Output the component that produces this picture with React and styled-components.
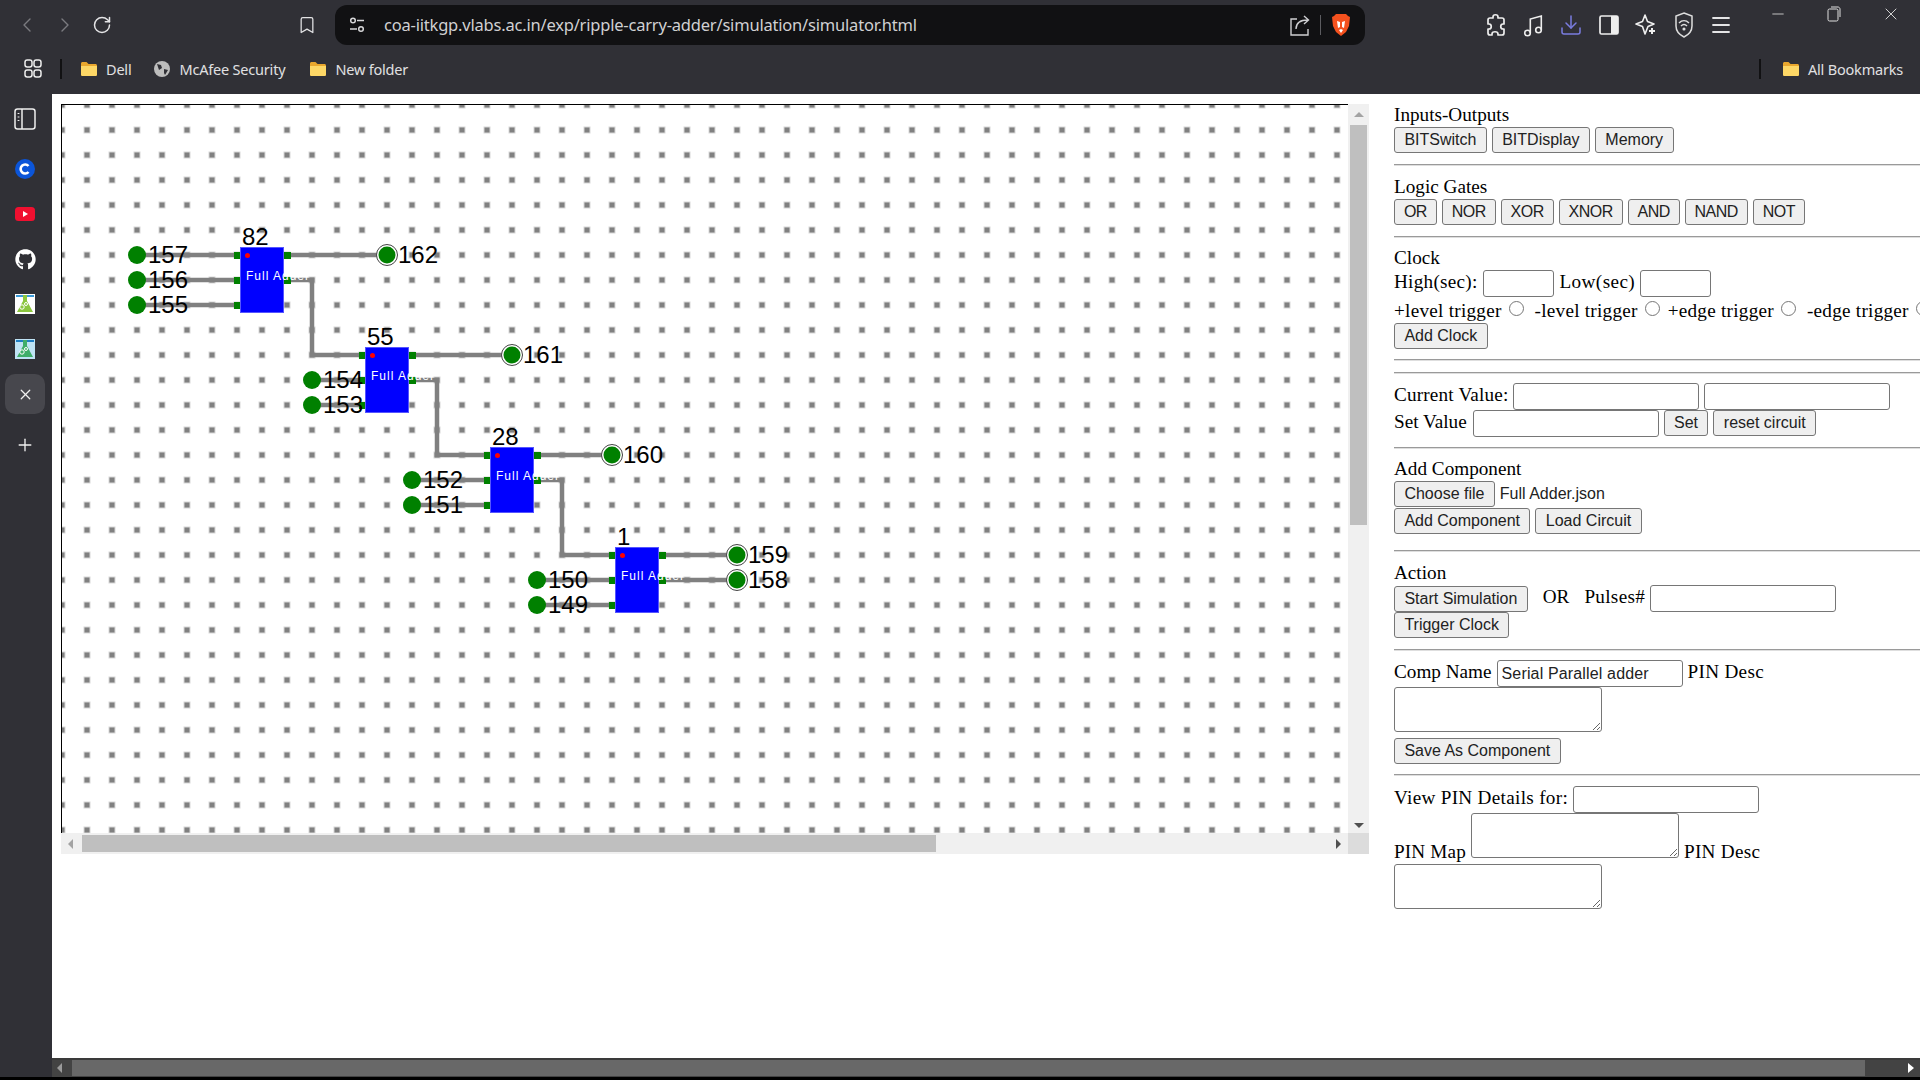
import styled, { createGlobalStyle } from 'styled-components';
import { ChevronLeft, ChevronRight, RotateCw, Bookmark, Download, Menu, X, Plus, Minus } from 'lucide-react';
import { FaGithub } from 'react-icons/fa';

const GlobalStyle = createGlobalStyle`
  html, body { margin: 0; padding: 0; overflow: hidden; }
  * { box-sizing: border-box; }
`;

const Page = styled.div`
  width: 1920px;
  height: 1080px;
  overflow: hidden;
  display: flex;
  flex-direction: column;
  background: #303036;
  font-family: "Liberation Serif", serif;
`;

/* browser chrome */
const TopBar = styled.div`
  height: 50px;
  flex: none;
  display: flex;
  align-items: center;
  position: relative;
`;

const IconSlot = styled.div`
  width: ${p => p.$w || 37.6}px;
  flex: none;
  display: flex;
  align-items: center;
  justify-content: center;
  margin-left: ${p => p.$left || 0}px;
  color: ${p => p.$color || '#e4e4e6'};
`;

const NavGroup = styled.div`
  display: flex;
  align-items: center;
  margin-left: 8px;
`;

const AddressBar = styled.div`
  width: 1030px;
  height: 40px;
  margin-left: 9px;
  background: #111113;
  border-radius: 12px;
  display: flex;
  align-items: center;
  color: #e2e2e4;
`;

const UrlText = styled.div`
  margin: 0 0 2px 5px;
  flex: 1;
  font: 16.5px "Noto Sans", sans-serif;
  letter-spacing: -0.2px;
  color: #d0d0d2;
`;

const AddressEnd = styled.div`
  display: flex;
  align-items: center;
  gap: 10px;
  padding-right: 14px;
`;

const VLine = styled.div`
  width: 1px;
  height: 20px;
  background: #5c5c60;
`;

const Tools = styled.div`
  display: flex;
  align-items: center;
  margin-left: 112px;
`;

const WindowButtons = styled.div`
  position: absolute;
  top: 5px;
  right: 1px;
  display: flex;
  color: #e0e0e0;
`;

const WindowBtn = styled.div`
  width: 56.500px;
  height: 18px;
  display: flex;
  align-items: center;
  justify-content: center;
`;

const BookmarkBar = styled.div`
  height: 44px;
  flex: none;
  display: flex;
  align-items: center;
  padding: 0 0 7px 22px;
  color: #e0e0e2;
  font: 14.500px "Noto Sans", sans-serif;
  letter-spacing: -0.2px;
`;

const BookmarkItem = styled.div`
  display: flex;
  align-items: center;
  gap: 8px;
  margin-left: ${p => p.$left || 0}px;
  padding-right: ${p => p.$right || 0}px;
`;

const BarDivider = styled.div`
  width: 2px;
  height: 20px;
  background: #111113;
  margin-left: ${p => p.$left || 0}px;
`;

const Spacer = styled.div`
  flex: 1;
`;

const Body = styled.div`
  flex: 1;
  min-height: 0;
  display: flex;
`;

const Sidebar = styled.div`
  width: 52px;
  flex: none;
  display: flex;
  flex-direction: column;
  align-items: center;
  padding-right: 2px;
`;

const SideSlot = styled.div`
  width: 40px;
  height: ${p => p.$h || 40}px;
  margin-bottom: 5px;
  margin-top: ${p => p.$top || 0}px;
  display: flex;
  align-items: center;
  justify-content: center;
  border-radius: 10px;
  color: #f0f0f0;
  background: ${p => (p.$active ? '#47474d' : 'transparent')};
`;

const Main = styled.div`
  flex: 1;
  min-width: 0;
  display: flex;
  flex-direction: column;
`;

const Content = styled.div`
  flex: 1;
  min-height: 0;
  background: #fff;
  display: flex;
  overflow: hidden;
`;

/* scrollable circuit canvas */
const CanvasFrame = styled.div`
  width: 1308px;
  height: 750px;
  flex: none;
  margin: 10px 0 0 9px;
  display: grid;
  grid-template-columns: 1fr 21px;
  grid-template-rows: 1fr 21px;
`;

const Viewport = styled.div`
  position: relative;
  overflow: hidden;
  border-top: 1px solid #000;
  border-left: 1px solid #000;
`;

const Board = styled.svg`
  display: block;
  position: absolute;
  left: 0;
  top: 0;
`;

const NodeLabel = styled.span`
  position: absolute;
  font: 24px/24px "Liberation Sans", sans-serif;
  color: #000;
  white-space: nowrap;
`;

const Adder = styled.div`
  position: absolute;
  width: 44px;
  height: 66px;
  background: #0000ff;
  border: 1px solid #5555ff;
`;

const AdderName = styled.span`
  position: absolute;
  left: 5px;
  top: 21px;
  font: 12px/14px "Liberation Sans", sans-serif;
  letter-spacing: 1px;
  color: #fff;
  white-space: nowrap;
`;

const RedPin = styled.i`
  position: absolute;
  left: 4px;
  top: 5px;
  width: 5px;
  height: 5px;
  border-radius: 50%;
  background: #ff0000;
`;

const VTrack = styled.div`
  background: #f0f0f0;
  position: relative;
`;

const VThumb = styled.div`
  position: absolute;
  left: 2px;
  right: 2px;
  top: 21px;
  height: 400px;
  background: #bfbfbf;
`;

const HTrack = styled.div`
  background: #f0f0f0;
  position: relative;
`;

const HThumb = styled.div`
  position: absolute;
  left: 21px;
  top: 2px;
  bottom: 2px;
  width: 854px;
  background: #bfbfbf;
`;

const Corner = styled.div`
  background: #dcdcdc;
`;

const Arrow = styled.i`
  position: absolute;
  width: 0;
  height: 0;
  ${p => p.$dir === 'up' && `left: 6px; top: 8px; border: 5px solid transparent; border-top: 0; border-bottom: 5px solid #a3a3a3;`}
  ${p => p.$dir === 'down' && `left: 6px; bottom: 5px; border: 5px solid transparent; border-bottom: 0; border-top: 5px solid #505050;`}
  ${p => p.$dir === 'left' && `left: 7px; top: 6px; border: 5px solid transparent; border-left: 0; border-right: 5px solid #a3a3a3;`}
  ${p => p.$dir === 'right' && `right: 7px; top: 6px; border: 5px solid transparent; border-right: 0; border-left: 5px solid #505050;`}
`;

/* control panel */
const Panel = styled.div`
  flex: 1;
  min-width: 0;
  margin-left: 25px;
  padding-top: 10px;
  font-size: 19.2px;
  color: #000;
  white-space: nowrap;
`;

const Title = styled.div`
  height: 23px;
  line-height: 21px;
`;

const Row = styled.div`
  height: ${p => p.$h || 26}px;
  display: flex;
  align-items: ${p => p.$align || 'center'};
  gap: ${p => p.$gap ?? 5}px;
  margin-top: ${p => p.$top || 0}px;
`;

const Label = styled.span`
  margin: 0 ${p => p.$right || 0}px ${p => p.$bottom ?? 3}px ${p => p.$left || 0}px;
  letter-spacing: ${p => p.$ls || 0}px;
  flex: none;
`;

const TriggerLabel = styled.span`
  margin-top: 2px;
  letter-spacing: 0.25px;
  flex: none;
`;

const Rule = styled.div`
  height: 2px;
  background: linear-gradient(#9a9a9a 50%, #dedede 50%);
  margin: ${p => p.$before ?? 11}px 0 ${p => p.$after ?? 10}px;
`;

const Btn = styled.button`
  height: 26px;
  padding: 0 ${p => (p.$tight ? 8.9 : 9.4)}px;
  background: #efefef;
  border: 1px solid #767676;
  border-radius: 3px;
  font: 16px "Liberation Sans", sans-serif;
  letter-spacing: ${p => (p.$tight ? -0.5 : 0)}px;
  color: #222;
  flex: none;
`;

const Field = styled.input`
  width: ${p => p.$w || 186}px;
  height: 27px;
  padding: 1px 4px;
  border: 1px solid #767676;
  border-radius: 3px;
  background: #fff;
  font: 16px "Liberation Sans", sans-serif;
  letter-spacing: 0.15px;
  color: #222;
  flex: none;
`;

const Memo = styled.textarea`
  display: block;
  width: 208px;
  height: 45px;
  border: 1px solid #767676;
  border-radius: 3px;
  background: #fff;
  padding: 2px;
  margin: ${p => p.$top || 0}px 0 0;
  flex: none;
`;

const Radio = styled.input.attrs({ type: 'radio' })`
  width: 15px;
  height: 15px;
  margin: -3px ${p => p.$right ?? 11}px 0 7px;
  flex: none;
`;

const FileName = styled.span`
  font: 16px "Liberation Sans", sans-serif;
  color: #222;
`;

const BottomBar = styled.div`
  height: 19px;
  flex: none;
  background: #434343;
  border-top: 2px solid #3a3a3a;
  position: relative;
`;

const BottomThumb = styled.div`
  position: absolute;
  left: 20px;
  top: 0;
  bottom: 1px;
  width: 1793px;
  background: #686868;
`;

const BottomArrow = styled.i`
  position: absolute;
  top: 3px;
  width: 0;
  height: 0;
  border: 5px solid transparent;
  ${p => (p.$right
    ? 'right: 6px; border-right: 0; border-left: 6px solid #fff;'
    : 'left: 5px; border-left: 0; border-right: 5px solid #9a9a9a;')}
`;

const BlackEdge = styled.div`
  height: 3px;
  flex: none;
  background: #000;
`;

const gx = c => 25 + 25 * c;
const gy = r => 25 + 25 * r;

const adders = [
  { id: 82, col: 6, row: 5 },
  { id: 55, col: 11, row: 9 },
  { id: 28, col: 16, row: 13 },
  { id: 1, col: 21, row: 17 },
];

const switches = [
  { id: 157, col: 2, row: 5, to: 6 },
  { id: 156, col: 2, row: 6, to: 6 },
  { id: 155, col: 2, row: 7, to: 6 },
  { id: 154, col: 9, row: 10, to: 11 },
  { id: 153, col: 9, row: 11, to: 11 },
  { id: 152, col: 13, row: 14, to: 16 },
  { id: 151, col: 13, row: 15, to: 16 },
  { id: 150, col: 18, row: 18, to: 21 },
  { id: 149, col: 18, row: 19, to: 21 },
];

const displays = [
  { id: 162, col: 12, row: 5, from: 8 },
  { id: 161, col: 17, row: 9, from: 13 },
  { id: 160, col: 21, row: 13, from: 18 },
  { id: 159, col: 26, row: 17, from: 23 },
  { id: 158, col: 26, row: 18, from: 23 },
];

const carries = [
  [[8, 6], [9, 6], [9, 9], [11, 9]],
  [[13, 10], [14, 10], [14, 13], [16, 13]],
  [[18, 14], [19, 14], [19, 17], [21, 17]],
];

const Folder = () => (
  <svg width="18" height="18" viewBox="0 0 18 18">
    <path d="M1 3.500C1 2.700 1.700 2 2.500 2h4l2 2h7c.8 0 1.500.7 1.500 1.500v9c0 .8-.7 1.500-1.500 1.500h-13C1.700 16 1 15.300 1 14.500z" fill="#e9a72e" />
    <path d="M1 6h16v8.500c0 .8-.7 1.500-1.500 1.500h-13C1.700 16 1 15.300 1 14.500z" fill="#fdd766" />
  </svg>
);

const Flask = ({ bg, top, body }) => (
  <svg width="20" height="20" viewBox="0 0 20 20">
    <rect width="20" height="20" fill={bg} />
    <rect x="1" y="1" width="7" height="2" fill={top} />
    <rect x="12" y="1" width="7" height="2" fill={top} />
    <path d="M8 1h4v6l6 11H2L8 7z" fill={body} />
    <circle cx="7" cy="13" r="2.200" fill="none" stroke="#fff" />
    <circle cx="11" cy="10" r="1.500" fill="none" stroke="#fff" />
  </svg>
);

const Circuit = () => (
  <>
    <Board width="1300" height="740">
      <defs>
        <pattern id="holes" x="21.500" y="21.500" width="25" height="25" patternUnits="userSpaceOnUse">
          <rect width="7" height="7" fill="#d6d6d6" />
          <rect x="1" y="1" width="5" height="5" fill="#808080" />
        </pattern>
      </defs>
      <rect width="1300" height="740" fill="url(#holes)" />
      <g stroke="#808080" strokeWidth="4.500" fill="none">
        {switches.map(s => (
          <line key={s.id} x1={gx(s.col)} y1={gy(s.row)} x2={gx(s.to)} y2={gy(s.row)} />
        ))}
        {displays.map(d => (
          <line key={d.id} x1={gx(d.from)} y1={gy(d.row)} x2={gx(d.col)} y2={gy(d.row)} />
        ))}
        {carries.map((c, i) => (
          <polyline key={i} points={c.map(([x, y]) => `${gx(x)},${gy(y)}`).join(' ')} />
        ))}
      </g>
      {adders.map(a => (
        <g key={a.id} fill="#008000">
          {[0, 1, 2].map(i => (
            <rect key={i} x={gx(a.col) - 3} y={gy(a.row + i) - 3} width="7" height="7" />
          ))}
          {[0, 1].map(i => (
            <rect key={i} x={gx(a.col + 2) - 3} y={gy(a.row + i) - 3} width="7" height="7" />
          ))}
        </g>
      ))}
      {switches.map(s => (
        <circle key={s.id} cx={gx(s.col)} cy={gy(s.row)} r="9" fill="#008000" />
      ))}
      {displays.map(d => (
        <g key={d.id}>
          <circle cx={gx(d.col)} cy={gy(d.row)} r="10.500" fill="#fff" stroke="#444" />
          <circle cx={gx(d.col)} cy={gy(d.row)} r="8.500" fill="#008000" />
        </g>
      ))}
    </Board>
    {adders.map(a => (
      <Adder key={a.id} style={{ left: gx(a.col) + 3, top: gy(a.row) - 8 }}>
        <RedPin />
        <AdderName>Full Adder</AdderName>
      </Adder>
    ))}
    {adders.map(a => (
      <NodeLabel key={a.id} style={{ left: gx(a.col) + 5, top: gy(a.row) - 30 }}>{a.id}</NodeLabel>
    ))}
    {switches.map(s => (
      <NodeLabel key={s.id} style={{ left: gx(s.col) + 11, top: gy(s.row) - 12 }}>{s.id}</NodeLabel>
    ))}
    {displays.map(d => (
      <NodeLabel key={d.id} style={{ left: gx(d.col) + 11, top: gy(d.row) - 12 }}>{d.id}</NodeLabel>
    ))}
  </>
);

export default function App() {
  return (
    <Page>
      <GlobalStyle />
      <TopBar>
        <NavGroup>
          <IconSlot $w={38} $color="#7b7b80"><ChevronLeft size={24} strokeWidth={1.4} /></IconSlot>
          <IconSlot $w={38} $color="#7b7b80"><ChevronRight size={24} strokeWidth={1.4} /></IconSlot>
          <IconSlot $w={36}><RotateCw size={20} strokeWidth={1.8} /></IconSlot>
        </NavGroup>
        <IconSlot $w={38} $left={168}><Bookmark size={20} strokeWidth={1.5} /></IconSlot>
        <AddressBar>
          <IconSlot $w={44}>
            <svg width="18" height="18" viewBox="0 0 18 18" fill="none" stroke="#d8d8da" strokeWidth="1.500">
              <circle cx="5" cy="4.500" r="2.300" />
              <path d="M9 4.500h7M2 13h7" />
              <circle cx="13" cy="13" r="2.300" />
            </svg>
          </IconSlot>
          <UrlText>coa-iitkgp.vlabs.ac.in/exp/ripple-carry-adder/simulation/simulator.html</UrlText>
          <AddressEnd>
            <svg width="21" height="21" viewBox="0 0 21 21" fill="none" stroke="#cfcfd2" strokeWidth="1.400">
              <path d="M8 4H2v16h17v-6" />
              <path d="M7 14c0-6 4-9 12-9M15 1l4.500 4-4.500 4" />
            </svg>
            <VLine />
            <svg width="20" height="24" viewBox="0 0 20 24">
              <path d="M5 1h10l2 2 2 1-1 9-3 6-5 4-5-4-3-6-1-9 2-1z" fill="#f4511e" />
              <path d="M6 8l3 1v5l-2 1zM14 8l-3 1v5l2 1zM8 17l2-1 2 1-2 3z" fill="#fff" />
            </svg>
          </AddressEnd>
        </AddressBar>
        <Tools>
          <IconSlot>
            <svg width="20" height="24" viewBox="0 0 20 24" fill="none" stroke="#eee" strokeWidth="1.700" strokeLinejoin="round">
              <path d="M7 4c0-3 5-3 5 0v1h4c1 0 2 1 2 2v4h-1c-3 0-3 5 0 5h1v4c0 1-1 2-2 2h-4v-1c0-3-6-3-6 0v1H4c-1 0-2-1-2-2v-4h1c3 0 3-5 0-5H2V7c0-1 1-2 2-2h3z" />
            </svg>
          </IconSlot>
          <IconSlot>
            <svg width="20" height="24" viewBox="0 0 20 24" fill="none" stroke="#eee" strokeWidth="1.600">
              <circle cx="4.500" cy="20" r="2.800" />
              <circle cx="15.500" cy="17" r="2.800" />
              <path d="M7.300 20V6l11-3v14" />
            </svg>
          </IconSlot>
          <IconSlot $color="#7a7ce0"><Download size={24} strokeWidth={1.5} /></IconSlot>
          <IconSlot>
            <svg width="20" height="20" viewBox="0 0 20 20">
              <rect x="1" y="1" width="18" height="18" rx="1.500" fill="none" stroke="#eee" strokeWidth="1.700" />
              <rect x="12" y="1" width="7" height="18" fill="#eee" />
            </svg>
          </IconSlot>
          <IconSlot>
            <svg width="22" height="24" viewBox="0 0 22 24" fill="none" stroke="#eee" strokeWidth="1.600" strokeLinejoin="round">
              <path d="M10 2l2.500 6.500L19 11l-6 2.500L10 21l-2.500-7.500L1 11l6.500-2.500z" />
              <path d="M17 15v6M14 18h6" strokeWidth="2" />
            </svg>
          </IconSlot>
          <IconSlot>
            <svg width="20" height="26" viewBox="0 0 20 26" fill="none" stroke="#ddd" strokeWidth="1.500">
              <path d="M10 1l8 3v10c0 5-4 9-8 11-4-2-8-6-8-11V4z" />
              <path d="M5 11c3-3 7-3 10 0M7 14c2-2 4-2 6 0" />
              <circle cx="10" cy="17" r=".8" fill="#ddd" />
            </svg>
          </IconSlot>
          <IconSlot><Menu size={24} strokeWidth={1.8} /></IconSlot>
        </Tools>
        <WindowButtons>
          <WindowBtn><Minus size={18} strokeWidth={1.1} /></WindowBtn>
          <WindowBtn>
            <svg width="14" height="16" viewBox="0 0 14 16" fill="none" stroke="#e0e0e0">
              <rect x="1" y="3" width="10" height="12" rx="1.500" />
              <path d="M4 1h7c1 0 2 1 2 2v8" />
            </svg>
          </WindowBtn>
          <WindowBtn><X size={20} strokeWidth={1.1} /></WindowBtn>
        </WindowButtons>
      </TopBar>

      <BookmarkBar>
        <svg width="22" height="22" viewBox="0 0 22 22" fill="none" stroke="#eee" strokeWidth="1.500">
          <rect x="3" y="2" width="7" height="7" rx="2.200" />
          <rect x="12" y="2" width="7" height="7" rx="2.200" />
          <rect x="3" y="12" width="7" height="7" rx="2.200" />
          <rect x="12" y="12" width="7" height="7" rx="2.200" />
        </svg>
        <BarDivider $left={16} />
        <BookmarkItem $left={18}><Folder />Dell</BookmarkItem>
        <BookmarkItem $left={22}>
          <svg width="18" height="18" viewBox="0 0 18 18">
            <circle cx="9" cy="9" r="8" fill="#bdbdbd" />
            <path d="M4 4l4 1 1 3-3 2zM11 9l4 1-3 5-1-2z" fill="#303036" />
          </svg>
          McAfee Security
        </BookmarkItem>
        <BookmarkItem $left={24}><Folder />New folder</BookmarkItem>
        <Spacer />
        <BarDivider />
        <BookmarkItem $left={21} $right={17}><Folder />All Bookmarks</BookmarkItem>
      </BookmarkBar>

      <Body>
        <Sidebar>
          <SideSlot $h={50}>
            <svg width="22" height="22" viewBox="0 0 22 22" fill="none" stroke="#eee" strokeWidth="1.500">
              <rect x="1" y="1" width="20" height="20" rx="2.500" />
              <path d="M8 1v20" />
              <path d="M4.500 5v1M4.500 8.500v1M4.500 12v1" strokeWidth="1.800" />
            </svg>
          </SideSlot>
          <SideSlot>
            <svg width="20" height="20" viewBox="0 0 20 20">
              <circle cx="10" cy="10" r="10" fill="#0b55d9" />
              <path d="M13.500 7a4.500 4.500 0 1 0 0 6" fill="none" stroke="#fff" strokeWidth="2.600" />
            </svg>
          </SideSlot>
          <SideSlot>
            <svg width="20" height="14" viewBox="0 0 20 14">
              <rect width="20" height="14" rx="3.500" fill="#f01030" />
              <path d="M8 4l5 3-5 3z" fill="#fff" />
            </svg>
          </SideSlot>
          <SideSlot><FaGithub size={21} color="#fff" /></SideSlot>
          <SideSlot><Flask bg="#fff" top="#3a9ad9" body="#8cc63f" /></SideSlot>
          <SideSlot><Flask bg="#bfe3f5" top="#1f7fc4" body="#3fae6a" /></SideSlot>
          <SideSlot $active><X size={17} strokeWidth={1.8} /></SideSlot>
          <SideSlot $top={6}><Plus size={20} strokeWidth={1.6} /></SideSlot>
        </Sidebar>

        <Main>
          <Content>
            <CanvasFrame>
              <Viewport><Circuit /></Viewport>
              <VTrack>
                <Arrow $dir="up" />
                <VThumb />
                <Arrow $dir="down" />
              </VTrack>
              <HTrack>
                <Arrow $dir="left" />
                <HThumb />
                <Arrow $dir="right" />
              </HTrack>
              <Corner />
            </CanvasFrame>

            <Panel>
              <Title>Inputs-Outputs</Title>
              <Row>
                <Btn>BITSwitch</Btn>
                <Btn>BITDisplay</Btn>
                <Btn>Memory</Btn>
              </Row>
              <Rule />

              <Title>Logic Gates</Title>
              <Row>
                {['OR', 'NOR', 'XOR', 'XNOR', 'AND', 'NAND', 'NOT'].map(g => <Btn key={g} $tight>{g}</Btn>)}
              </Row>
              <Rule $after={9} />

              <Title>Clock</Title>
              <Row $h={27}>
                <Label $ls={0.25}>High(sec):</Label>
                <Field $w={71} />
                <Label $ls={0.4} $left={1}>Low(sec)</Label>
                <Field $w={71} />
              </Row>
              <Row $gap={0}>
                <TriggerLabel>+level trigger</TriggerLabel><Radio name="trig" />
                <TriggerLabel>-level trigger</TriggerLabel><Radio name="trig" $right={8} />
                <TriggerLabel>+edge trigger</TriggerLabel><Radio name="trig" />
                <TriggerLabel>-edge trigger</TriggerLabel><Radio name="trig" />
              </Row>
              <Row $h={25}><Btn>Add Clock</Btn></Row>
              <Rule $after={0} />
              <Rule $after={9} />

              <Row $h={27}>
                <Label $ls={0.17}>Current Value:</Label>
                <Field />
                <Field />
              </Row>
              <Row>
                <Label $right={1}>Set Value</Label>
                <Field />
                <Btn>Set</Btn>
                <Btn>reset circuit</Btn>
              </Row>
              <Rule $after={9} />

              <Title>Add Component</Title>
              <Row>
                <Btn>Choose file</Btn>
                <FileName>Full Adder.json</FileName>
              </Row>
              <Row $top={1}>
                <Btn>Add Component</Btn>
                <Btn>Load Circuit</Btn>
              </Row>
              <Rule $before={16} />

              <Title>Action</Title>
              <Row $h={27}>
                <Btn>Start Simulation</Btn>
                <Label $left={10}>OR</Label>
                <Label $left={10} $ls={0.3}>Pulses#</Label>
                <Field />
              </Row>
              <Row><Btn>Trigger Clock</Btn></Row>
              <Rule $after={9} />

              <Row $h={27}>
                <Label>Comp Name</Label>
                <Field defaultValue="Serial Parallel adder" />
                <Label $ls={0.3}>PIN Desc</Label>
              </Row>
              <Memo />
              <Row $top={6}><Btn>Save As Component</Btn></Row>
              <Rule $before={10} />

              <Row $h={27}>
                <Label $ls={0.3}>View PIN Details for:</Label>
                <Field />
              </Row>
              <Row $h={45} $align="flex-end">
                <Label $bottom={-5} $ls={0.15}>PIN Map</Label>
                <Memo />
                <Label $bottom={-5} $ls={0.3}>PIN Desc</Label>
              </Row>
              <Memo $top={6} />
            </Panel>
          </Content>
          <BottomBar>
            <BottomArrow />
            <BottomThumb />
            <BottomArrow $right />
          </BottomBar>
        </Main>
      </Body>
      <BlackEdge />
    </Page>
  );
}
